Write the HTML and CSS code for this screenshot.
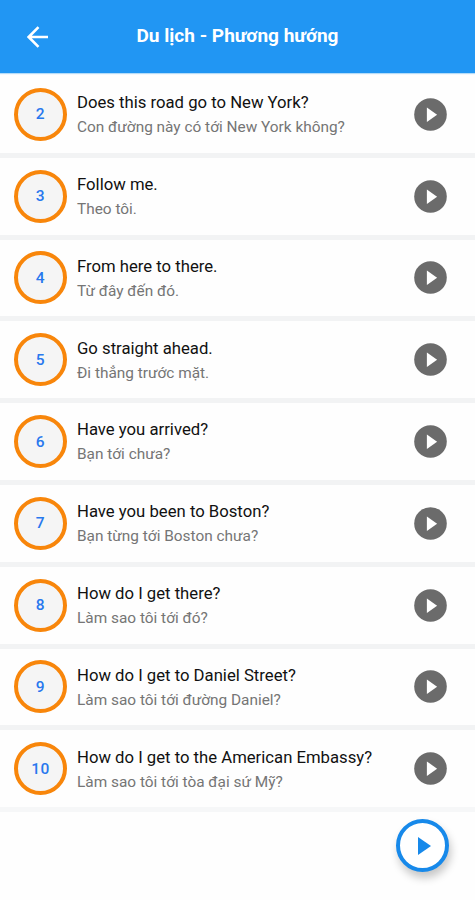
FILE: index.html
```
<!DOCTYPE html>
<html lang="vi">
<head>
    <meta charset="UTF-8">
    <meta name="viewport" content="width=device-width, initial-scale=1.0">
    <title>Du lịch - Phương hướng</title>
    <link rel="stylesheet" href="styles.css">
</head>
<body>
<svg class="icons">
    <symbol id="play" viewBox="0 0 33 33">
        <circle cx="16.5" cy="16.5" r="16.3" fill="#6b6b6b"/>
        <path d="M12.9 9.4v14.6l10.2-7.3z" fill="#fff"/>
    </symbol>
</svg>
<header class="header">
    <svg class="back" viewBox="0 0 22 22">
        <path d="M21 11H2M11.5 1.2L1.7 11l9.8 9.8" fill="none" stroke="#fff" stroke-width="2.6"/>
    </svg>
    <h1 class="heading">Du lịch - Phương hướng</h1>
</header>
<main class="list">
    <div class="row">
        <div class="number">2</div>
        <div class="text">
            <div class="phrase">Does this road go to New York?</div>
            <div class="translation">Con đường này có tới New York không?</div>
        </div>
        <svg class="play"><use href="#play"/></svg>
    </div>
    <div class="row">
        <div class="number">3</div>
        <div class="text">
            <div class="phrase">Follow me.</div>
            <div class="translation">Theo tôi.</div>
        </div>
        <svg class="play"><use href="#play"/></svg>
    </div>
    <div class="row">
        <div class="number">4</div>
        <div class="text">
            <div class="phrase">From here to there.</div>
            <div class="translation">Từ đây đến đó.</div>
        </div>
        <svg class="play"><use href="#play"/></svg>
    </div>
    <div class="row">
        <div class="number">5</div>
        <div class="text">
            <div class="phrase">Go straight ahead.</div>
            <div class="translation">Đi thẳng trước mặt.</div>
        </div>
        <svg class="play"><use href="#play"/></svg>
    </div>
    <div class="row">
        <div class="number">6</div>
        <div class="text">
            <div class="phrase">Have you arrived?</div>
            <div class="translation">Bạn tới chưa?</div>
        </div>
        <svg class="play"><use href="#play"/></svg>
    </div>
    <div class="row">
        <div class="number">7</div>
        <div class="text">
            <div class="phrase">Have you been to Boston?</div>
            <div class="translation">Bạn từng tới Boston chưa?</div>
        </div>
        <svg class="play"><use href="#play"/></svg>
    </div>
    <div class="row">
        <div class="number">8</div>
        <div class="text">
            <div class="phrase">How do I get there?</div>
            <div class="translation">Làm sao tôi tới đó?</div>
        </div>
        <svg class="play"><use href="#play"/></svg>
    </div>
    <div class="row">
        <div class="number">9</div>
        <div class="text">
            <div class="phrase">How do I get to Daniel Street?</div>
            <div class="translation">Làm sao tôi tới đường Daniel?</div>
        </div>
        <svg class="play"><use href="#play"/></svg>
    </div>
    <div class="row">
        <div class="number">10</div>
        <div class="text">
            <div class="phrase">How do I get to the American Embassy?</div>
            <div class="translation">Làm sao tôi tới tòa đại sứ Mỹ?</div>
        </div>
        <svg class="play"><use href="#play"/></svg>
    </div>
</main>
<button class="play-all" aria-label="Play all">
    <svg class="play-all-icon" viewBox="0 0 13 18"><path d="M0 0v18l13-9z" fill="#1789ea"/></svg>
</button>
</body>
</html>
```

FILE: styles.css
```
* {
    box-sizing: border-box;
}
body {
    margin: 0;
    height: 900px;
    overflow: hidden;
    font-family: Roboto, sans-serif;
    background-color: #fefefe;
}
.icons {
    display: none;
}
.header {
    display: grid;
    grid-template-columns: 50px 1fr 50px;
    align-items: center;
    height: 73px;
    padding: 0 0 0 27px;
    background-color: #2196f3;
    box-shadow: 0 1px 1px #b5dcf8;
    color: #fff;
}
.back {
    width: 22px;
    height: 22px;
}
.heading {
    margin: 0 27px 1px 0;
    font-size: 19.05px;
    font-weight: 700;
    line-height: 24px;
    text-align: center;
}
.list {
    padding-top: 3px;
}
.row {
    display: flex;
    align-items: center;
    height: 81.8px;
    padding: 0 28px 0 14px;
    border-bottom: 5px solid #f2f3f4;
}
.row:last-child {
    border-bottom-color: #f6f7f8;
}
.number {
    display: flex;
    align-items: center;
    justify-content: center;
    width: 53px;
    height: 53px;
    border: 4px solid #f8860b;
    border-radius: 50%;
    background-color: #f5f5f5;
    color: #2878ee;
    font-size: 15.5px;
    font-weight: 500;
    letter-spacing: 0.5px;
}
.text {
    flex: 1;
    margin-left: 10px;
    padding-top: 1.5px;
}
.phrase {
    color: #111;
    font-size: 16.7px;
    line-height: 24px;
    white-space: nowrap;
}
.translation {
    color: #757575;
    font-size: 15.4px;
    line-height: 24px;
    white-space: nowrap;
}
.play {
    width: 33px;
    height: 33px;
}
.play-all {
    display: flex;
    align-items: center;
    justify-content: center;
    position: absolute;
    right: 26px;
    bottom: 28px;
    width: 53px;
    height: 53px;
    padding: 0 0 0 3px;
    border: 4px solid #1789ea;
    border-radius: 50%;
    background-color: #fff;
    box-shadow: 2px 6px 9px rgba(0, 0, 0, 0.22);
}
.play-all-icon {
    width: 13px;
    height: 18px;
}
```
